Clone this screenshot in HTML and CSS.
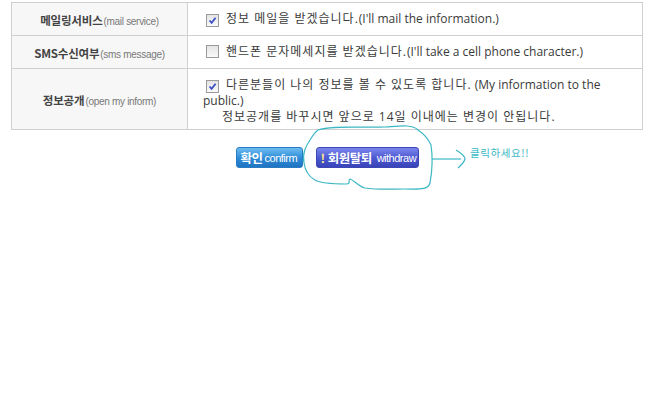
FILE: index.html
```html
<!DOCTYPE html>
<html lang="ko">
<head>
<meta charset="utf-8">
<title>회원정보</title>
<link rel="stylesheet" href="styles.css">
</head>
<body>
<div class="page">
  <table class="info">
    <tr class="r1">
      <th><b>메일링서비스</b><span class="en">(mail service)</span></th>
      <td><span class="cb on"><svg viewBox="0 0 9 9" width="9" height="9"><path d="M1.5 4.5 L3.6 6.8 L7.6 1.8" fill="none" stroke="#3d4fc4" stroke-width="1.8"/></svg></span><span class="ko">정보 메일을 받겠습니다.</span>(I'll mail the information.)</td>
    </tr>
    <tr class="r2">
      <th><b>SMS수신여부</b><span class="en">(sms message)</span></th>
      <td><span class="cb"></span><span class="ko">핸드폰 문자메세지를 받겠습니다.</span>(I'll take a cell phone character.)</td>
    </tr>
    <tr class="r3">
      <th><b>정보공개</b><span class="en">(open my inform)</span></th>
      <td><span class="line"><span class="cb on"><svg viewBox="0 0 9 9" width="9" height="9"><path d="M1.5 4.5 L3.6 6.8 L7.6 1.8" fill="none" stroke="#3d4fc4" stroke-width="1.8"/></svg></span><span class="ko">다른분들이 나의 정보를 볼 수 있도록 합니다.</span> (My information to the</span><span class="line">public.)</span><span class="line indent"><span class="ko">정보공개를 바꾸시면 앞으로 14일 이내에는 변경이 안됩니다.</span></span></td>
    </tr>
  </table>
  <div class="actions">
    <span class="btn confirm"><b>확인</b><span class="sm">confirm</span></span>
    <span class="btn withdraw"><b><i>!</i>회원탈퇴</b><span class="sm">withdraw</span></span>
  </div>
  <span class="note">클릭하세요!!</span>
  <svg class="scribble" width="645" height="400" viewBox="0 0 645 400">
    <path d="M318 130 C 330 125, 360 128, 385 127 C 400 126, 412 124, 418 130 C 424 134, 428 138, 431 145 C 433 158, 432 172, 430 183 C 428 190, 420 189, 405 189 C 392 189, 378 190, 365 188 C 358 186, 354 180, 350 179 C 347 180, 352 184, 346 184 C 335 184, 322 184, 315 180 C 308 176, 305 170, 304 163 C 302 153, 306 146, 310 140 C 313 135, 315 132, 318 130 Z" fill="none" stroke="#3cb8c4" stroke-width="1.2"/>
    <path d="M432 159 L 461 159" fill="none" stroke="#3cb8c4" stroke-width="1.2"/>
    <path d="M456 150 C 461 153, 465 156, 465 159 C 464 163, 461 165, 458 168" fill="none" stroke="#3cb8c4" stroke-width="1.2"/>
  </svg>
</div>
</body>
</html>
```
FILE: styles.css
```css
html, body {
  margin: 0;
  padding: 0;
  background: #fff;
}
.page {
  position: relative;
  width: 645px;
  height: 400px;
  padding: 2px 0 0 11px;
  box-sizing: border-box;
  font-family: "Open Sans", "Noto Sans CJK KR", sans-serif;
  font-size: 12px;
  color: #333;
}
.info {
  width: 632px;
  border-collapse: collapse;
  border-top: 1px solid #cfcfcf;
}
.info th, .info td {
  border: 1px solid #d0d0d0;
  border-top: 0;
  padding: 0;
}
.info th {
  width: 175px;
  background: #f7f7f7;
  font-weight: normal;
  text-align: center;
  white-space: nowrap;
  font-family: "Noto Sans CJK KR", sans-serif;
}
.info th b {
  font-size: 11.5px;
  color: #444;
  font-weight: bold;
  letter-spacing: -0.2px;
}
.info th .en {
  font-family: "Liberation Sans", sans-serif;
  font-size: 10px;
  color: #777;
  letter-spacing: -0.3px;
  margin-left: 1px;
}
.info td {
  padding: 0 12px 0 15px;
  line-height: 16px;
  color: #3a3a3a;
}
.r3 td {
  padding-top: 3px;
}
.ko {
  letter-spacing: 1px;
}
.line {
  display: block;
  white-space: nowrap;
}
.indent {
  padding-left: 19px;
}
.r1 th, .r1 td { height: 32px; }
.r2 th, .r2 td { height: 32px; }
.r3 th { height: 60px; }
.r3 td { height: 57px; }
.cb {
  display: inline-flex;
  align-items: center;
  justify-content: center;
  width: 11px;
  height: 11px;
  border: 1px solid #9a9a9a;
  background: linear-gradient(#e4e4e4, #fafafa);
  margin: 0 7px 0 3px;
  vertical-align: -2px;
}
.actions {
  display: flex;
  justify-content: center;
  gap: 13px;
  width: 632px;
  margin-top: 17px;
}
.btn {
  display: inline-flex;
  align-items: center;
  height: 19px;
  border-radius: 3px;
  color: #fff;
  padding: 0 4px;
  white-space: nowrap;
}
.btn b {
  font-family: "Noto Sans CJK KR", sans-serif;
  font-size: 12.5px;
  font-weight: bold;
  letter-spacing: -0.5px;
}
.btn .sm {
  font-family: "Liberation Sans", sans-serif;
  font-size: 11px;
  letter-spacing: -0.5px;
  margin-left: 2px;
}
.confirm {
  width: 57px;
  background: linear-gradient(#6cbdf0, #2d8ad6 55%, #1f74c2);
  border: 1px solid #2a7cc2;
}
.withdraw {
  width: 93px;
  background: linear-gradient(#7a86ec, #4a57cf 55%, #3a44b8);
  border: 1px solid #3c47b5;
}
.withdraw i {
  font-style: normal;
  color: #ffe98a;
  margin-right: 3px;
}
.withdraw .sm {
  margin-left: 5px;
}
.note {
  position: absolute;
  left: 470px;
  top: 145px;
  font-family: "Noto Sans CJK KR", sans-serif;
  font-size: 10.5px;
  color: #3cb8c4;
  letter-spacing: 0.6px;
}
.scribble {
  position: absolute;
  left: 0;
  top: 0;
  pointer-events: none;
}
```
